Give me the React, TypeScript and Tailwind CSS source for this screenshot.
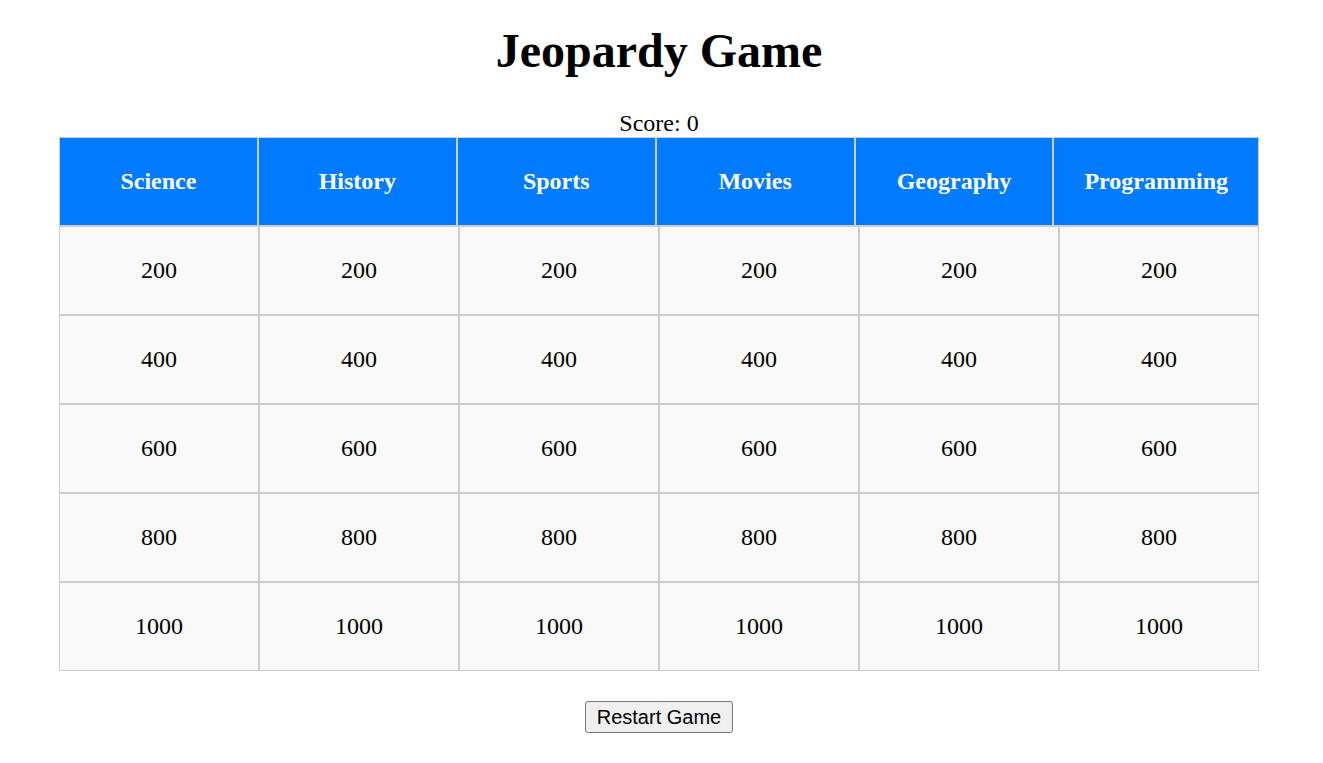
const categories = ['Science', 'History', 'Sports', 'Movies', 'Geography', 'Programming'];
const values = [200, 400, 600, 800, 1000];

export default function App() {
  return (
    <div className="w-[1318px] text-center text-black font-['Liberation_Serif',serif]">
      <h1 className="text-[48px] leading-[53px] font-bold pt-[24px] mb-[33px]">Jeopardy Game</h1>
      <div className="text-[24px] leading-[27px]">Score: 0</div>

      <div className="w-[1200px] mx-auto">
        {/* Category headers */}
        <div className="flex">
          {categories.map((c) => (
            <div
              key={c}
              className="flex-1 h-[89px] px-[30px] pb-[2px] flex items-center justify-center border border-[#ccc] bg-[#007bff] text-white text-[24px] font-bold"
            >
              {c}
            </div>
          ))}
        </div>

        {/* Question cells, one row per value */}
        <div className="grid grid-cols-6">
          {values.map((v) =>
            categories.map((c) => (
              <div
                key={c + v}
                className="h-[89px] pb-[2px] flex items-center justify-center border border-[#ccc] bg-[#f9f9f9] text-[24px] cursor-pointer"
              >
                {v}
              </div>
            ))
          )}
        </div>
      </div>

      <div className="mt-[30px]">
        <button className="h-[32px] px-[11px] border border-[#767676] rounded-[3px] bg-[#efefef] text-[20px] leading-[23px] font-['Liberation_Sans',Arial,sans-serif]">
          Restart Game
        </button>
      </div>
    </div>
  );
}
